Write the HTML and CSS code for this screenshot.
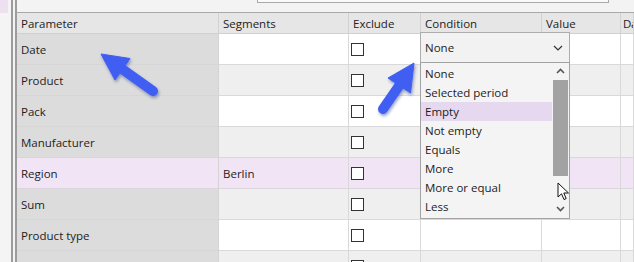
FILE: index.html
```html
<!DOCTYPE html>
<html>

<head>
    <title>Filter parameters</title>
    <link rel="stylesheet" href="styles.css">
</head>

<body>
    <div class="side">
        <div class="side-tab"></div>
    </div>
    <div class="panel">
        <div class="toolbar">
            <div class="search"></div>
        </div>
        <div class="grid">
            <div class="row head">
                <div class="cell">Parameter</div>
                <div class="cell">Segments</div>
                <div class="cell">Exclude</div>
                <div class="cell">Condition</div>
                <div class="cell">Value</div>
                <div class="cell last">Da</div>
            </div>
            <div class="row">
                <div class="cell name">Date</div>
                <div class="cell"></div>
                <div class="cell"><span class="check"></span></div>
                <div class="cell"></div>
                <div class="cell"></div>
                <div class="cell"></div>
            </div>
            <div class="row alt">
                <div class="cell name">Product</div>
                <div class="cell"></div>
                <div class="cell"><span class="check"></span></div>
                <div class="cell"></div>
                <div class="cell"></div>
                <div class="cell"></div>
            </div>
            <div class="row">
                <div class="cell name">Pack</div>
                <div class="cell"></div>
                <div class="cell"><span class="check"></span></div>
                <div class="cell"></div>
                <div class="cell"></div>
                <div class="cell"></div>
            </div>
            <div class="row alt">
                <div class="cell name">Manufacturer</div>
                <div class="cell"></div>
                <div class="cell"><span class="check"></span></div>
                <div class="cell"></div>
                <div class="cell"></div>
                <div class="cell"></div>
            </div>
            <div class="row sel">
                <div class="cell name">Region</div>
                <div class="cell">Berlin</div>
                <div class="cell"><span class="check"></span></div>
                <div class="cell"></div>
                <div class="cell"></div>
                <div class="cell"></div>
            </div>
            <div class="row alt">
                <div class="cell name">Sum</div>
                <div class="cell"></div>
                <div class="cell"><span class="check"></span></div>
                <div class="cell"></div>
                <div class="cell"></div>
                <div class="cell"></div>
            </div>
            <div class="row">
                <div class="cell name">Product type</div>
                <div class="cell"></div>
                <div class="cell"><span class="check"></span></div>
                <div class="cell"></div>
                <div class="cell"></div>
                <div class="cell"></div>
            </div>
            <div class="row alt">
                <div class="cell name"></div>
                <div class="cell"></div>
                <div class="cell"><span class="check"></span></div>
                <div class="cell"></div>
                <div class="cell"></div>
                <div class="cell"></div>
            </div>
        </div>
    </div>

    <!-- condition editor, open -->
    <div class="combo">
        <span>None</span>
        <svg class="combo-arrow" width="10" height="6" viewBox="0 0 10 6">
            <polyline points="1,1 5,5 9,1" fill="none" stroke="#333" stroke-width="1.2" />
        </svg>
    </div>
    <div class="dropdown">
        <ul class="options">
            <li>None</li>
            <li>Selected period</li>
            <li class="hover">Empty</li>
            <li>Not empty</li>
            <li>Equals</li>
            <li>More</li>
            <li>More or equal</li>
            <li>Less</li>
        </ul>
        <div class="scrollbar">
            <svg width="9" height="6" viewBox="0 0 9 6">
                <polyline points="1,5 4.5,1.5 8,5" fill="none" stroke="#555" stroke-width="1.6" />
            </svg>
            <div class="thumb"></div>
            <svg class="down" width="9" height="6" viewBox="0 0 9 6">
                <polyline points="1,1 4.5,4.5 8,1" fill="none" stroke="#555" stroke-width="1.6" />
            </svg>
        </div>
    </div>

    <svg class="pointer" width="14" height="20" viewBox="0 0 14 20">
        <path d="M1 1 L1 15 L4.5 11.8 L7 17.5 L9.2 16.6 L6.8 11 L11.5 11 Z" fill="#fff" stroke="#111"
            stroke-width="1" stroke-linejoin="round" />
    </svg>

    <svg class="marks" width="634" height="262" viewBox="0 0 634 262">
        <defs>
            <filter id="shade" x="-20%" y="-20%" width="140%" height="140%">
                <feDropShadow dx="1" dy="2" stdDeviation="1.5" flood-color="#1b2a80" flood-opacity="0.45" />
            </filter>
        </defs>
        <g fill="#3f5ef2" stroke="#3f5ef2" filter="url(#shade)">
            <line x1="153" y1="91" x2="120" y2="67.5" stroke-width="10" stroke-linecap="round" />
            <polygon points="101,54 130,58.5 115,80" stroke-width="1" stroke-linejoin="round" />
            <line x1="383" y1="109" x2="401" y2="83" stroke-width="10" stroke-linecap="round" />
            <polygon points="414,63 410.5,93 388,78" stroke-width="1" stroke-linejoin="round" />
        </g>
    </svg>
</body>

</html>
```

FILE: styles.css
```css
body {
    margin: 0;
    width: 634px;
    height: 262px;
    overflow: hidden;
    position: relative;
    display: flex;
    background: #f3f3f3;
    font-family: "Open Sans", "Noto Sans", sans-serif;
    font-size: 11.5px;
    color: #1c1c1c;
}

.side {
    width: 11px;
    flex-shrink: 0;
    background: #f4f4f4;
}

.side-tab {
    width: 8px;
    height: 13px;
    background: #ede0f1;
}

.panel {
    flex-grow: 1;
    min-width: 0;
    height: 262px;
    overflow: hidden;
    border-left: 6px double #9c9c9c;
    display: flex;
    flex-direction: column;
}

.toolbar {
    height: 12px;
    flex-shrink: 0;
    position: relative;
    background: #f3f3f3;
}

.search {
    position: absolute;
    left: 240px;
    top: -10px;
    width: 350px;
    height: 11px;
    background: #fafafa;
    border: 1px solid #a9a9a9;
}

.grid {
    flex-grow: 1;
    min-height: 0;
    overflow: hidden;
    border-top: 1px solid #a8a8a8;
    background: #fff;
}

.row {
    display: grid;
    grid-template-columns: 202px 130px 72px 121px 79px 1fr;
}

.cell {
    height: 30px;
    padding-left: 4px;
    display: flex;
    align-items: center;
    border-right: 1px solid #d9d9d9;
    border-bottom: 1px solid #d9d9d9;
    white-space: nowrap;
    overflow: hidden;
}

.head .cell {
    height: 20px;
    background: #e6e6e6;
    border-right-color: #d2d2d2;
    border-bottom-color: #d0d0d0;
    color: #222;
}

.head .last {
    padding-left: 2px;
    letter-spacing: -0.4px;
}

.name {
    background: #dcdcdc;
    border-right-color: #d4d4d4;
    border-bottom-color: #d6d6d6;
}

.alt .cell {
    background: #efefef;
}

.alt .name {
    background: #dcdcdc;
}

.sel .cell,
.sel .name {
    background: #f1e4f5;
    border-bottom-color: #dcd4df;
}

.check {
    width: 11px;
    height: 11px;
    margin-left: -2px;
    border: 1px solid #333;
    background: #fff;
}

.combo {
    position: absolute;
    left: 420px;
    top: 32px;
    width: 138px;
    height: 29px;
    border: 1px solid #adadad;
    background: #f2f2f2;
    display: flex;
    align-items: center;
    justify-content: space-between;
    padding: 0 6px 0 4px;
}

.dropdown {
    position: absolute;
    left: 420px;
    top: 62px;
    width: 148px;
    height: 155px;
    border: 1px solid #a3a3a3;
    background: #f4f4f4;
    display: flex;
}

.options {
    list-style: none;
    margin: 0;
    padding: 1px 0 0;
    flex-grow: 1;
}

.options li {
    height: 19px;
    line-height: 19px;
    padding-left: 4px;
}

.options li.hover {
    background: #e6d9ef;
}

.scrollbar {
    width: 17px;
    display: flex;
    flex-direction: column;
    align-items: center;
    padding-top: 5px;
}

.thumb {
    width: 15px;
    height: 96px;
    margin-top: 6px;
    background: #a2a2a2;
}

.scrollbar .down {
    margin-top: 30px;
}

.pointer {
    position: absolute;
    left: 557px;
    top: 182px;
}

.marks {
    position: absolute;
    left: 0;
    top: 0;
    pointer-events: none;
}
```
